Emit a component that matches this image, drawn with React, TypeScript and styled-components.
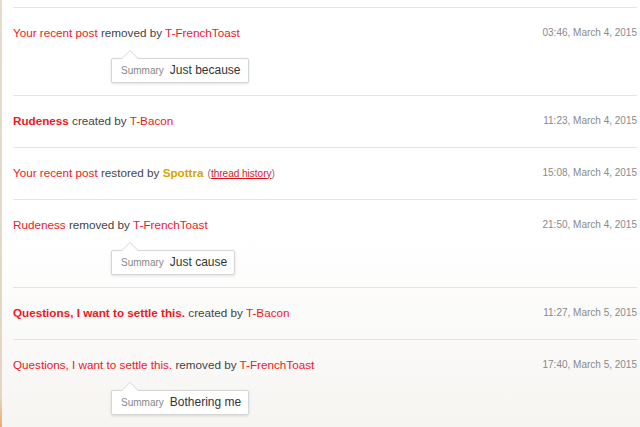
import React from "react";
import styled, { createGlobalStyle } from "styled-components";

const Global = createGlobalStyle`
  html, body { margin: 0; padding: 0; }
  body {
    width: 640px;
    height: 427px;
    overflow: hidden;
    font-family: "Liberation Sans", Arial, Helvetica, sans-serif;
    -webkit-font-smoothing: antialiased;
  }
`;

const Page = styled.div`
  display: flex;
  width: 640px;
  height: 427px;
  background: linear-gradient(180deg, #ffffff 0%, #ffffff 55%, #f6f5f2 100%);
`;

const Stripe = styled.div`
  width: 2px;
  flex: none;
  background: linear-gradient(180deg, #e6dccd 0%, #e2d6c4 93%, #f2a86e 100%);
`;

const Feed = styled.div`
  flex: 1;
  padding: 7px 3px 0 11px;
  display: flex;
  flex-direction: column;
`;

const Row = styled.div<{ $summary?: boolean }>`
  border-top: 1px solid #e4e4e4;
  padding: 17px 0 ${(p) => (p.$summary ? "12px" : "18px")};
`;

const Line = styled.div`
  display: flex;
  justify-content: space-between;
  align-items: center;
  height: 16px;
  line-height: 16px;
  font-size: 11.7px;
  color: #444;
`;

const Title = styled.span<{ $bold?: boolean }>`
  color: #f2161e;
  font-weight: ${(p) => (p.$bold ? 700 : 400)};
`;

const User = styled.span<{ $gold?: boolean }>`
  color: ${(p) => (p.$gold ? "#dba200" : "#f2161e")};
  font-weight: ${(p) => (p.$gold ? 700 : 400)};
`;

const History = styled.span`
  font-size: 10px;
  color: #777;
  margin-left: 4px;
  a {
    color: #e0141c;
    text-decoration: underline;
  }
`;

const Time = styled.span`
  font-size: 10px;
  line-height: 16px;
  color: #8a8a8a;
`;

const SummaryBox = styled.div`
  position: relative;
  display: inline-flex;
  align-items: baseline;
  gap: 6px;
  margin: 17px 0 0 98px;
  padding: 4px 7px 4px 9px;
  background: #fff;
  border: 1px solid #d6d6d6;
  border-radius: 2px;
  box-shadow: 0 1px 3px rgba(0, 0, 0, 0.12);
  line-height: 14px;
  &::before,
  &::after {
    content: "";
    position: absolute;
    left: 9px;
    width: 0;
    height: 0;
    border-left: 9px solid transparent;
    border-right: 9px solid transparent;
  }
  &::before {
    top: -9px;
    border-bottom: 9px solid #d6d6d6;
  }
  &::after {
    top: -8px;
    border-bottom: 9px solid #fff;
  }
`;

const SummaryLabel = styled.span`
  font-size: 10px;
  color: #888;
`;

const SummaryText = styled.span`
  font-size: 12px;
  color: #333;
`;

const Wrap = styled.div``;

type Item = {
  title: string;
  bold?: boolean;
  action: string;
  user: string;
  gold?: boolean;
  history?: boolean;
  time: string;
  summary?: string;
};

const items: Item[] = [
  { title: "Your recent post", action: "removed by", user: "T-FrenchToast", time: "03:46, March 4, 2015", summary: "Just because" },
  { title: "Rudeness", bold: true, action: "created by", user: "T-Bacon", time: "11:23, March 4, 2015" },
  { title: "Your recent post", action: "restored by", user: "Spottra", gold: true, history: true, time: "15:08, March 4, 2015" },
  { title: "Rudeness", action: "removed by", user: "T-FrenchToast", time: "21:50, March 4, 2015", summary: "Just cause" },
  { title: "Questions, I want to settle this.", bold: true, action: "created by", user: "T-Bacon", time: "11:27, March 5, 2015" },
  { title: "Questions, I want to settle this.", action: "removed by", user: "T-FrenchToast", time: "17:40, March 5, 2015", summary: "Bothering me" },
];

export default function App() {
  return (
    <>
      <Global />
      <Page>
        <Stripe />
        <Feed>
          {items.map((it, i) => (
            <Row key={i} $summary={!!it.summary}>
              <Line>
                <Wrap>
                  <Title $bold={it.bold}>{it.title}</Title> {it.action}{" "}
                  <User $gold={it.gold}>{it.user}</User>
                  {it.history && (
                    <History>
                      (<a href="#">thread history</a>)
                    </History>
                  )}
                </Wrap>
                <Time>{it.time}</Time>
              </Line>
              {it.summary && (
                <SummaryBox>
                  <SummaryLabel>Summary</SummaryLabel>
                  <SummaryText>{it.summary}</SummaryText>
                </SummaryBox>
              )}
            </Row>
          ))}
        </Feed>
      </Page>
    </>
  );
}
